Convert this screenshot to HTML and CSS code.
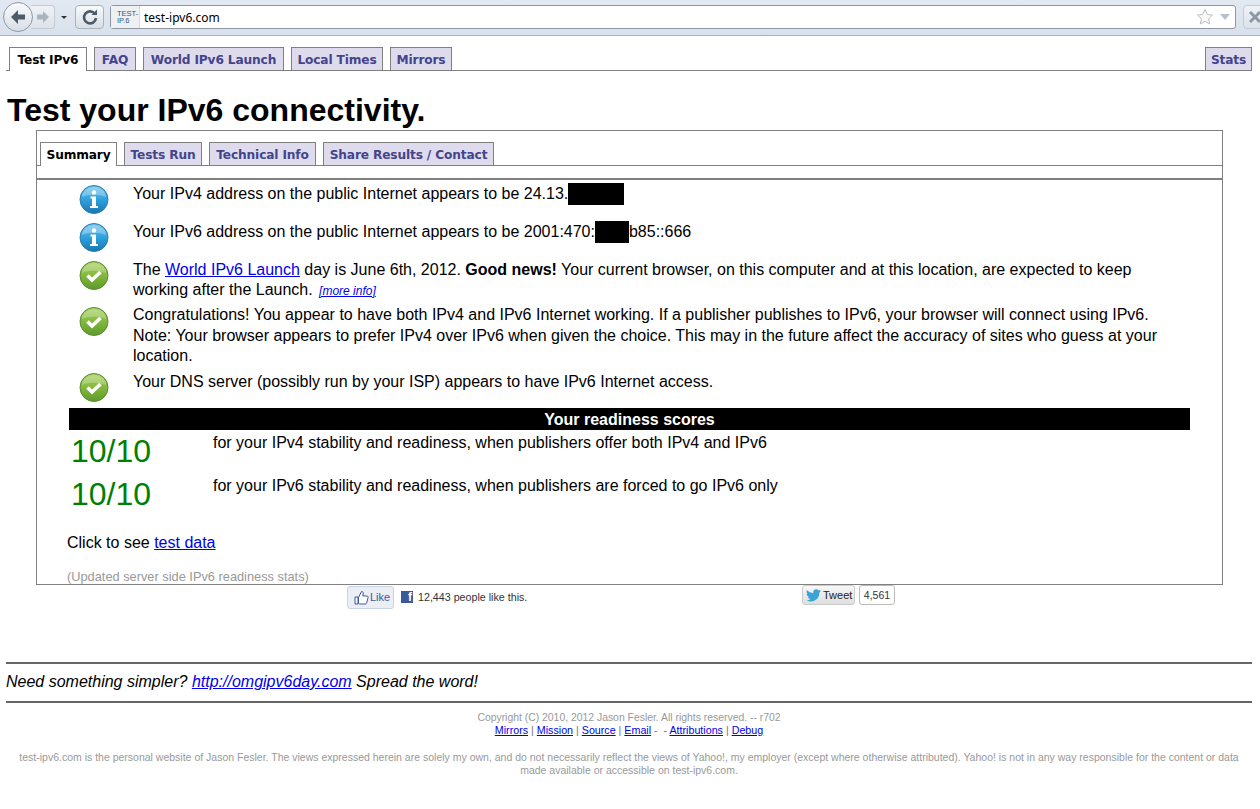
FILE: index.html
```html
<!DOCTYPE html>
<html lang="en">
<head>
<meta charset="utf-8">
<title>Test your IPv6 connectivity.</title>
<link rel="stylesheet" href="styles.css">
</head>
<body>
<svg class="defs" width="0" height="0" aria-hidden="true">
  <defs>
    <linearGradient id="blue" x1="0" y1="0" x2="0" y2="1"><stop offset="0" stop-color="#6cc4ee"/><stop offset=".55" stop-color="#2b9ddb"/><stop offset="1" stop-color="#1a76b0"/></linearGradient>
    <linearGradient id="green" x1="0" y1="0" x2="0" y2="1"><stop offset="0" stop-color="#a9d25e"/><stop offset=".55" stop-color="#7fb53a"/><stop offset="1" stop-color="#5d9a2b"/></linearGradient>
    <symbol id="info" viewBox="0 0 30 30">
      <circle cx="15" cy="15.5" r="14" fill="url(#blue)" stroke="#2a7fae" stroke-width="1"/>
      <path d="M3 13a12 10 0 0 1 24 0c-6-3-18-3-24 0z" fill="#fff" opacity=".28"/>
      <circle cx="15" cy="8.5" r="2.2" fill="#fff"/>
      <path d="M11.5 12.5h5.5v9.5h2v2h-8v-2h2v-7.500h-1.500z" fill="#fff"/>
    </symbol>
    <symbol id="ok" viewBox="0 0 30 30">
      <circle cx="15" cy="15.500" r="14" fill="url(#green)" stroke="#5b8c35" stroke-width="1"/>
      <path d="M3 13a12 10 0 0 1 24 0c-6-3-18-3-24 0z" fill="#fff" opacity=".25"/>
      <path d="M8.500 15.500l4.500 4.500 8.500-8" fill="none" stroke="#fff" stroke-width="3.600"/>
    </symbol>
  </defs>
</svg>

<header class="browser">
  <div class="nav-pill">
    <button class="back" aria-label="Back"><svg width="20" height="20" viewBox="0 0 20 20"><path d="M10 3L3 10l7 7v-4.500h7v-5h-7z" fill="#4d5a68"/></svg></button>
    <span class="forward"><svg width="16" height="16" viewBox="0 0 16 16"><path d="M8 2l6 6-6 6v-3.500H2v-5h6z" fill="#a9b4bf"/></svg></span>
  </div>
  <span class="drop"></span>
  <button class="reload" aria-label="Reload"><svg width="18" height="18" viewBox="0 0 18 18"><path d="M14 6A6 6 0 1 0 15 10" fill="none" stroke="#4d5a68" stroke-width="2.600"/><path d="M10.500 7H16V1.500z" fill="#4d5a68"/></svg></button>
  <div class="url">
    <span class="favicon">TEST-<br>IP.6</span>
    <span class="url-text">test-ipv6.com</span>
    <svg class="star" width="18" height="18" viewBox="0 0 18 18"><path d="M9 1.500l2.300 5 5.200.600-3.900 3.600 1.100 5.300L9 13.300l-4.700 2.700 1.100-5.300-3.900-3.600 5.200-.600z" fill="#fafafa" stroke="#b9c0c6"/></svg>
    <span class="url-drop"></span>
  </div>
  <span class="stop"><svg width="14" height="14" viewBox="0 0 14 14"><path d="M2 2l10 10M12 2L2 12" stroke="#8d98a6" stroke-width="3"/></svg></span>
</header>

<nav class="tabs top-tabs">
  <a class="tab active">Test IPv6</a>
  <a class="tab">FAQ</a>
  <a class="tab">World IPv6 Launch</a>
  <a class="tab">Local Times</a>
  <a class="tab">Mirrors</a>
  <a class="tab stats">Stats</a>
</nav>

<h1>Test your IPv6 connectivity.</h1>

<main class="box">
  <nav class="tabs inner-tabs">
    <a class="tab active">Summary</a>
    <a class="tab">Tests Run</a>
    <a class="tab">Technical Info</a>
    <a class="tab">Share Results / Contact</a>
  </nav>
  <div class="rule"></div>

  <div class="msg m1"><svg class="icon"><use href="#info"/></svg><p>Your IPv4 address on the public Internet appears to be 24.13.<span class="redact r1"></span></p></div>
  <div class="msg m2"><svg class="icon"><use href="#info"/></svg><p>Your IPv6 address on the public Internet appears to be 2001:470:<span class="redact r2"></span>b85::666</p></div>
  <div class="msg m3"><svg class="icon"><use href="#ok"/></svg><p>The <a href="#">World IPv6 Launch</a> day is June 6th, 2012. <b>Good news!</b> Your current browser, on this computer and at this location, are expected to keep working after the Launch. <a class="more" href="#">[more info]</a></p></div>
  <div class="msg m4"><svg class="icon"><use href="#ok"/></svg><p>Congratulations! You appear to have both IPv4 and IPv6 Internet working. If a publisher publishes to IPv6, your browser will connect using IPv6.<br>Note: Your browser appears to prefer IPv4 over IPv6 when given the choice. This may in the future affect the accuracy of sites who guess at your location.</p></div>
  <div class="msg m5"><svg class="icon"><use href="#ok"/></svg><p>Your DNS server (possibly run by your ISP) appears to have IPv6 Internet access.</p></div>

  <div class="banner">Your readiness scores</div>
  <div class="score"><span class="num">10/10</span><span class="desc">for your IPv4 stability and readiness, when publishers offer both IPv4 and IPv6</span></div>
  <div class="score"><span class="num">10/10</span><span class="desc">for your IPv6 stability and readiness, when publishers are forced to go IPv6 only</span></div>

  <p class="click">Click to see <a href="#">test data</a></p>
  <p class="updated">(Updated server side IPv6 readiness stats)</p>
</main>

<section class="social">
  <div class="like-group">
    <span class="like"><svg width="15" height="15" viewBox="0 0 15 15"><path d="M1 7h3v7H1zM4.500 7.500L7.500 1.500c1.500 0 2 1 1.700 2.500L8.800 6H13c1 0 1.300 1 1 1.800l-1.300 5c-.2.800-.8 1.200-1.500 1.200H6c-.8 0-1.500-.3-1.500-1z" fill="#fff" stroke="#3b5998"/></svg>Like</span>
    <span class="fb">f</span>
    <span class="like-text">12,443 people like this.</span>
  </div>
  <div class="tweet-group">
    <span class="tweet"><svg width="15" height="13" viewBox="0 0 15 13"><path d="M15 1.800c-.6.300-1.200.4-1.800.5.600-.4 1.100-1 1.300-1.700-.6.400-1.300.6-1.900.8a3 3 0 0 0-5.200 2.800C4.800 4 2.600 2.800 1 1c-.8 1.400-.4 3.200 1 4-.5 0-1-.1-1.400-.4 0 1.500 1 2.800 2.500 3.100-.5.100-.9.100-1.400.1.400 1.200 1.500 2 2.900 2.100A6 6 0 0 1 0 11.100 8.700 8.700 0 0 0 13.400 3.400c.7-.4 1.200-1 1.600-1.600z" fill="#3aa3d8"/></svg>Tweet</span>
    <span class="count">4,561</span>
  </div>
</section>

<footer class="foot">
  <hr>
  <p class="simple">Need something simpler? <a href="#">http://omgipv6day.com</a> Spread the word!</p>
  <hr>
  <p class="copy">Copyright (C) 2010, 2012 Jason Fesler. All rights reserved. -- r702</p>
  <p class="links"><a href="#">Mirrors</a> | <a href="#">Mission</a> | <a href="#">Source</a> | <a href="#">Email</a> - &nbsp;- <a href="#">Attributions</a> | <a href="#">Debug</a></p>
  <p class="legal">test-ipv6.com is the personal website of Jason Fesler. The views expressed herein are solely my own, and do not necessarily reflect the views of Yahoo!, my employer (except where otherwise attributed). Yahoo! is not in any way responsible for the content or data made available or accessible on test-ipv6.com.</p>
</footer>
</body>
</html>
```

FILE: styles.css
```css
* { box-sizing: border-box; }
html, body { margin: 0; padding: 0; }
body { background: #fff; color: #000; font-family: "Liberation Sans", Arial, sans-serif; font-size: 16px; overflow: hidden; height: 809px; }
a { color: #00e; }
p { margin: 0; }
.defs { display: block; height: 0; }

/* browser chrome */
.browser { height: 36px; background: linear-gradient(#e3e9f2, #d8e1ec); border-bottom: 1px solid #a9b2bd; display: flex; align-items: center; padding: 0 0 1px 3px; overflow: hidden; }
.nav-pill { display: flex; align-items: center; }
.back { width: 30px; height: 30px; border-radius: 50%; border: 1px solid #8d98a6; background: linear-gradient(#f8fafc, #d9dfe7); padding: 0; display: flex; align-items: center; justify-content: center; position: relative; z-index: 1; }
.forward { width: 24px; height: 24px; margin-left: -2px; border: 1px solid #c3ccd6; border-left: 0; border-radius: 0 4px 4px 0; background: linear-gradient(#eef2f6, #dde3ea); display: flex; align-items: center; justify-content: center; }
.drop { width: 0; height: 0; border-left: 3px solid transparent; border-right: 3px solid transparent; border-top: 3px solid #333; margin-left: 6px; }
.reload { width: 29px; height: 24px; margin-left: 8px; border: 1px solid #a9b2bd; border-radius: 4px; background: linear-gradient(#f8fafc, #d9dfe7); padding: 0; display: flex; align-items: center; justify-content: center; flex: none; }
.url { flex: 0 0 1126px; height: 24px; margin-left: 6px; background: #fff; border: 1px solid #8f97a3; border-radius: 3px; display: flex; align-items: center; }
.favicon { width: 29px; height: 22px; background: #eef0f2; color: #2a5a8a; font: 7.500px/7px "Liberation Sans", sans-serif; padding: 4px 0 0 6px; flex: none; border-right: 1px solid #d5d9dd; }
.url-text { font-family: "Noto Sans", sans-serif; font-size: 12px; margin-left: 4px; flex: 1; }
.star { margin-right: 6px; }
.url-drop { width: 0; height: 0; border-left: 5px solid transparent; border-right: 5px solid transparent; border-top: 6px solid #b7c2cc; margin-right: 5px; }
.stop { flex: none; width: 24px; height: 24px; margin-left: 7px; border: 1px solid #c3ccd6; border-radius: 4px 0 0 4px; background: linear-gradient(#eef2f6, #dde3ea); display: flex; align-items: center; justify-content: center; }

/* tabs */
.tabs { display: flex; align-items: flex-end; font-family: "DejaVu Sans", Verdana, sans-serif; font-weight: 700; font-size: 12.200px; letter-spacing: -.15px; border-bottom: 1px solid #808080; }
.tab { height: 23px; line-height: 24px; padding: 0; margin-right: 7px; background: #dedcec; color: #44448c; border: 1px solid #808080; border-bottom: 0; white-space: nowrap; text-align: center; flex: none; }
.tab.active { background: #fff; color: #000; height: 24px; margin-bottom: -1px; }
.top-tabs { margin: 11px 8px 0 6px; padding-left: 3px; height: 24px; }
.top-tabs .tab:nth-child(1) { width: 78px; }
.top-tabs .tab:nth-child(2) { width: 42px; }
.top-tabs .tab:nth-child(3) { width: 141px; }
.top-tabs .tab:nth-child(4) { width: 92px; }
.top-tabs .tab:nth-child(5) { width: 62px; }
.top-tabs .stats { width: 47px; margin-left: auto; margin-right: 0; }
.inner-tabs .tab:nth-child(1) { width: 77px; }
.inner-tabs .tab:nth-child(2) { width: 78px; }
.inner-tabs .tab:nth-child(3) { width: 107px; }
.inner-tabs .tab:nth-child(4) { width: 171px; }

h1 { font-size: 32px; line-height: 37px; font-weight: 700; margin: 21px 0 0 7px; }

/* main box */
.box { margin: 1px 37px 0 36px; height: 455px; border: 1px solid #808080; padding-top: 11px; }
.inner-tabs { padding-left: 3px; height: 24px; }
.rule { height: 2px; margin-top: 12px; background: #808080; }
.msg { display: flex; padding-left: 42px; line-height: 20.500px; }
.msg p { margin-left: 24px; width: 1040px; }
.icon { width: 30px; height: 30px; flex: none; }
.m1 { margin-top: 4px; height: 38px; }
.m2 { height: 38px; }
.m3 { height: 46px; }
.m3 p { line-height: 20px; }
.m4 { height: 66px; }
.m5 { height: 36px; }
.m1 p, .m2 p, .m4 p { margin-top: -1px; }
.redact { display: inline-block; background: #000; height: 22px; vertical-align: -6px; }
.r1 { width: 56px; }
.r2 { width: 34px; }
.more { font-size: 12px; font-style: italic; margin-left: 2px; }

.banner { margin: 0 32px; height: 22px; background: #000; color: #fff; text-align: center; font-weight: 700; line-height: 23px; }
.score { display: flex; margin-left: 34px; height: 42px; }
.num { width: 142px; color: #008000; font-size: 32px; line-height: 42px; flex: none; }
.desc { line-height: 26px; }
.score + .score .desc { margin-top: 1px; }
.score + .score .num { margin-top: 1px; }
.click { margin: 19px 0 0 30px; line-height: 20px; }
.updated { margin: 17px 0 0 30px; color: #999; font-size: 12.800px; line-height: 14px; }

/* social */
.social { display: flex; height: 77px; padding-left: 347px; }
.like-group { display: flex; align-items: center; height: 24px; width: 455px; flex: none; }
.like { display: flex; align-items: center; gap: 1px; width: 47px; height: 23px; padding-left: 6px; background: #eceef5; border: 1px solid #cad4e7; border-radius: 3px; color: #3b5998; font-size: 11px; }
.fb { width: 12px; height: 12px; margin-left: 7px; background: #3b5998; color: #fff; font: 700 12px/13px "Liberation Sans", sans-serif; text-align: right; padding-right: 1px; overflow: hidden; }
.like-text { margin-left: 5px; font-size: 10.700px; color: #333; }
.tweet-group { display: flex; align-items: center; height: 20px; }
.tweet { display: flex; align-items: center; gap: 2px; width: 53px; height: 20px; padding-left: 3px; background: linear-gradient(#f8f8f8, #dedede); border: 1px solid #ccc; border-radius: 3px; color: #222; font-size: 11px; font-weight: 400; }
.count { margin-left: 4px; width: 36px; height: 20px; border: 1px solid #bbb; border-radius: 3px; font-size: 10.500px; line-height: 18px; text-align: center; color: #333; }

/* footer */
.foot { padding: 0 8px 0 6px; }
hr { margin: 0; height: 2px; border: 0; background: #666; }
.simple { font-style: italic; line-height: 35px; height: 37px; }
.copy { margin-top: 8px; text-align: center; color: #999; font-size: 10.400px; line-height: 13px; }
.links { text-align: center; font-size: 10.700px; line-height: 13px; color: #777; }
.legal { margin: 14px 10px 0; text-align: center; color: #999; font-size: 10.500px; line-height: 13px; }
```
